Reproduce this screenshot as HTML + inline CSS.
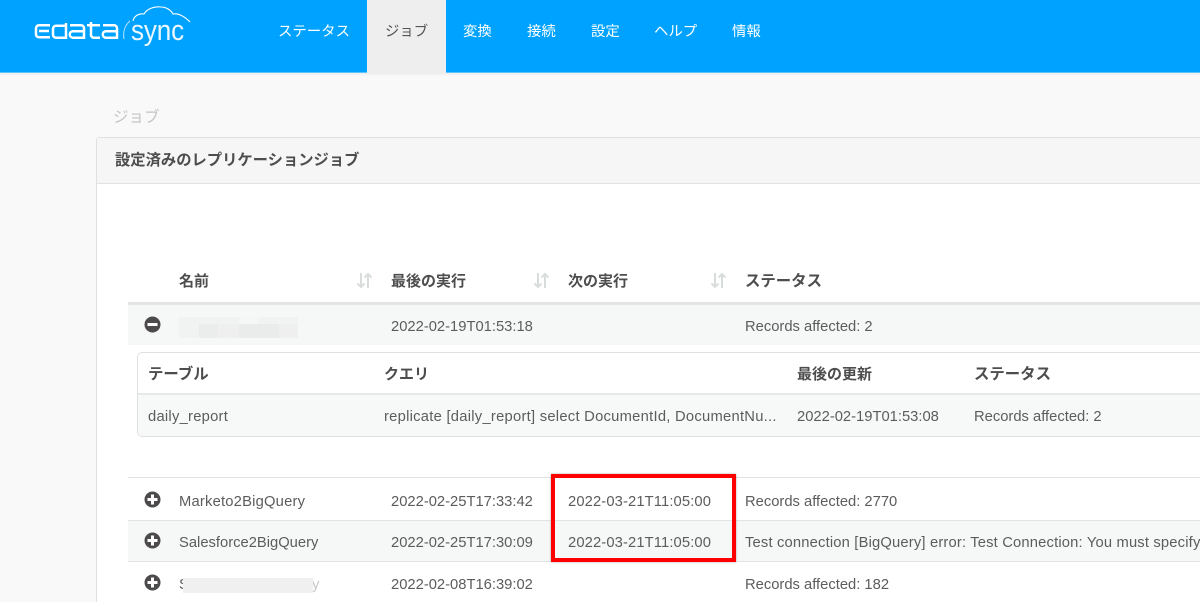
<!DOCTYPE html>
<html lang="ja"><head><meta charset="utf-8"><title>ジョブ</title>
<style>
*{box-sizing:border-box}
html,body{margin:0;padding:0;width:1200px;height:602px;overflow:hidden}
#r{width:1200px;height:602px;overflow:hidden;position:relative;background:#f9f9f9;font-family:"Liberation Sans","Noto Sans CJK JP",sans-serif;color:#5c5c5c;font-size:14.75px}
.a{position:absolute;white-space:nowrap;line-height:20px}
.b{position:absolute}
.h{font-weight:700;color:#4d4d4d;font-size:15px}
.n{color:#fff;font-size:14.400px}
.line{position:absolute;height:1px;background:#e1e4e4}
</style></head><body><div id="r">
<div class="b" style="left:0;top:0;width:1200px;height:73px;background:#00a2ff;border-bottom:1px solid #5cc3fd"></div>
<div class="b" style="left:0;top:73px;width:1200px;height:3px;background:linear-gradient(#ececec,#f9f9f9)"></div>
<div class="b" style="left:367px;top:0;width:79px;height:73px;background:#eee"></div>

<svg class="b" style="left:0;top:0" width="200" height="50" viewBox="0 0 200 50" fill="none" stroke="#fff">
<path d="M50 25.300H39a3 3 0 0 0-3 3v6a3 3 0 0 0 3 3h11M39 31h10" stroke-width="2.500"/>
<path d="M66 23v14.700H56a3 3 0 0 1-3-3v-6a3 3 0 0 1 3-3h10" stroke-width="2.500"/>
<path d="M70 25.300h11a3 3 0 0 1 3 3v9.400H73a3 3 0 0 1 0-6.500h11" stroke-width="2.500"/>
<path d="M87 25.300h13M91 22v12a3 3 0 0 0 3 3.700h6" stroke-width="2.500"/>
<path d="M103 25.300h11a3 3 0 0 1 3 3v9.400h-11a3 3 0 0 1 0-6.500h11" stroke-width="2.500"/>
<path d="M130 21C124 26 123 32 124 39" stroke-width="1" opacity=".75"/>
<path d="M133 21c1-5 6-8 11-7 3-5 10-8 17-7 5 0 10 3 12 7 6-1 12 3 17 8" stroke-width="1.100"/>
</svg>
<div class="a" style="left:131px;top:15px;font-size:29px;line-height:32px;color:#fff;letter-spacing:-.2px;transform:scaleX(.9);transform-origin:left;opacity:.92">sync</div>

<div class="a n" style="left:278px;top:22px;">ステータス</div>
<div class="a" style="left:385px;top:22px;font-size:14.400px;color:#555">ジョブ</div>
<div class="a n" style="left:463px;top:22px">変換</div>
<div class="a n" style="left:527px;top:22px">接続</div>
<div class="a n" style="left:591px;top:22px">設定</div>
<div class="a n" style="left:654px;top:22px">ヘルプ</div>
<div class="a n" style="left:732px;top:22px">情報</div>

<div class="a" style="left:113px;top:108px;font-size:15.500px;color:#c4c4c4">ジョブ</div>

<div class="b" style="left:96px;top:137px;width:1110px;height:470px;background:#fff;border:1px solid #e0e0e0;border-radius:3px 0 0 0"></div>
<div class="b" style="left:97px;top:138px;width:1103px;height:46px;background:#f6f6f6;border-bottom:1px solid #e2e2e2"></div>
<div class="a h" style="left:115px;top:151px;font-size:15.300px">設定済みのレプリケーションジョブ</div>

<div class="a h" style="left:179px;top:272px">名前</div>
<div class="a h" style="left:391px;top:272px">最後の実行</div>
<div class="a h" style="left:568px;top:272px">次の実行</div>
<div class="a h" style="left:745px;top:272px;font-size:15.400px">ステータス</div>
<svg class="b" style="left:356px;top:272px" width="17" height="17" fill="none" stroke="#d8dcdc" stroke-width="2"><path d="M5 1v14M1.500 11.500 5 15l3.500-3.500M12 16V2M8.500 5.500 12 2l3.500 3.500"/></svg>
<svg class="b" style="left:533px;top:272px" width="17" height="17" fill="none" stroke="#d8dcdc" stroke-width="2"><path d="M5 1v14M1.500 11.500 5 15l3.500-3.500M12 16V2M8.500 5.500 12 2l3.500 3.500"/></svg>
<svg class="b" style="left:710px;top:272px" width="17" height="17" fill="none" stroke="#d8dcdc" stroke-width="2"><path d="M5 1v14M1.500 11.500 5 15l3.500-3.500M12 16V2M8.500 5.500 12 2l3.500 3.500"/></svg>

<div class="b" style="left:128px;top:302px;width:1072px;height:3px;background:#e3e5e5"></div>
<div class="b" style="left:128px;top:305px;width:1072px;height:40px;background:#f6f8f8"></div>
<svg class="b" style="left:144px;top:316px" width="17" height="17"><circle cx="8.500" cy="8.500" r="8" fill="#4c4a4a"/><rect x="3.500" y="7" width="10" height="3" fill="#fff"/></svg>
<svg class="b" style="left:179px;top:317px" width="119" height="21" shape-rendering="crispEdges">
<rect width="119" height="21" fill="#f1f2f2"/>
<rect x="20" y="7" width="19" height="14" fill="#ebecec"/><rect x="60" y="7" width="40" height="14" fill="#eaebeb"/><rect x="60" y="0" width="20" height="7" fill="#f6f6f6"/><rect x="40" y="7" width="20" height="14" fill="#efefef"/><rect x="100" y="7" width="19" height="14" fill="#efefef"/>
</svg>
<div class="a" style="left:391px;top:317px">2022-02-19T01:53:18</div>
<div class="a" style="left:745px;top:317px">Records affected: 2</div>

<div class="b" style="left:137px;top:352px;width:1075px;height:85px;background:#fff;border:1px solid #dfe1e1;border-radius:5px"></div>
<div class="b" style="left:138px;top:393px;width:1062px;height:43px;background:#f7f9f9;border-top:2px solid #e7e9e9;border-bottom-left-radius:4px"></div>
<div class="a h" style="left:148px;top:365px;font-size:15.400px">テーブル</div>
<div class="a h" style="left:384px;top:365px">クエリ</div>
<div class="a h" style="left:797px;top:365px">最後の更新</div>
<div class="a h" style="left:974px;top:365px;font-size:15.400px">ステータス</div>
<div class="a" style="left:148px;top:407px;letter-spacing:.25px">daily_report</div>
<div class="a" style="left:384px;top:407px;letter-spacing:.26px">replicate [daily_report] select DocumentId, DocumentNu...</div>
<div class="a" style="left:797px;top:407px">2022-02-19T01:53:08</div>
<div class="a" style="left:974px;top:407px">Records affected: 2</div>

<div class="line" style="left:128px;top:477px;width:1072px"></div>
<div class="b" style="left:128px;top:520px;width:1072px;height:42px;background:#f6f8f8;border-top:1px solid #e1e4e4;border-bottom:1px solid #e1e4e4"></div>

<svg class="b" style="left:144px;top:491px" width="17" height="17"><circle cx="8.500" cy="8.500" r="8" fill="#4c4a4a"/><path d="M3.500 8.500h10M8.500 3.500v10" stroke="#fff" stroke-width="3"/></svg>
<div class="a" style="left:179px;top:492px;letter-spacing:.2px">Marketo2BigQuery</div>
<div class="a" style="left:391px;top:492px">2022-02-25T17:33:42</div>
<div class="a" style="left:568px;top:492px;letter-spacing:.12px">2022-03-21T11:05:00</div>
<div class="a" style="left:745px;top:492px">Records affected: 2770</div>

<svg class="b" style="left:144px;top:532px" width="17" height="17"><circle cx="8.500" cy="8.500" r="8" fill="#4c4a4a"/><path d="M3.500 8.500h10M8.500 3.500v10" stroke="#fff" stroke-width="3"/></svg>
<div class="a" style="left:179px;top:533px">Salesforce2BigQuery</div>
<div class="a" style="left:391px;top:533px">2022-02-25T17:30:09</div>
<div class="a" style="left:568px;top:533px;letter-spacing:.12px">2022-03-21T11:05:00</div>
<div class="a" style="left:745px;top:533px;letter-spacing:.17px">Test connection [BigQuery] error: Test Connection: You must specify</div>

<svg class="b" style="left:144px;top:574px" width="17" height="17"><circle cx="8.500" cy="8.500" r="8" fill="#4c4a4a"/><path d="M3.500 8.500h10M8.500 3.500v10" stroke="#fff" stroke-width="3"/></svg>
<div class="a" style="left:179px;top:575px">S</div>
<div class="a" style="left:258px;top:575px">ig</div>
<div class="a" style="left:312px;top:575px;color:#c8c8c8">y</div>
<div class="b" style="left:183px;top:578px;width:130px;height:15px;background:#f0f0f0"></div>
<div class="a" style="left:391px;top:575px">2022-02-08T16:39:02</div>
<div class="a" style="left:745px;top:575px">Records affected: 182</div>

<div class="b" style="left:551px;top:474px;width:185px;height:88px;border:4px solid #f00;box-shadow:0 0 2px rgba(0,0,0,.35)"></div>
</div></body></html>
